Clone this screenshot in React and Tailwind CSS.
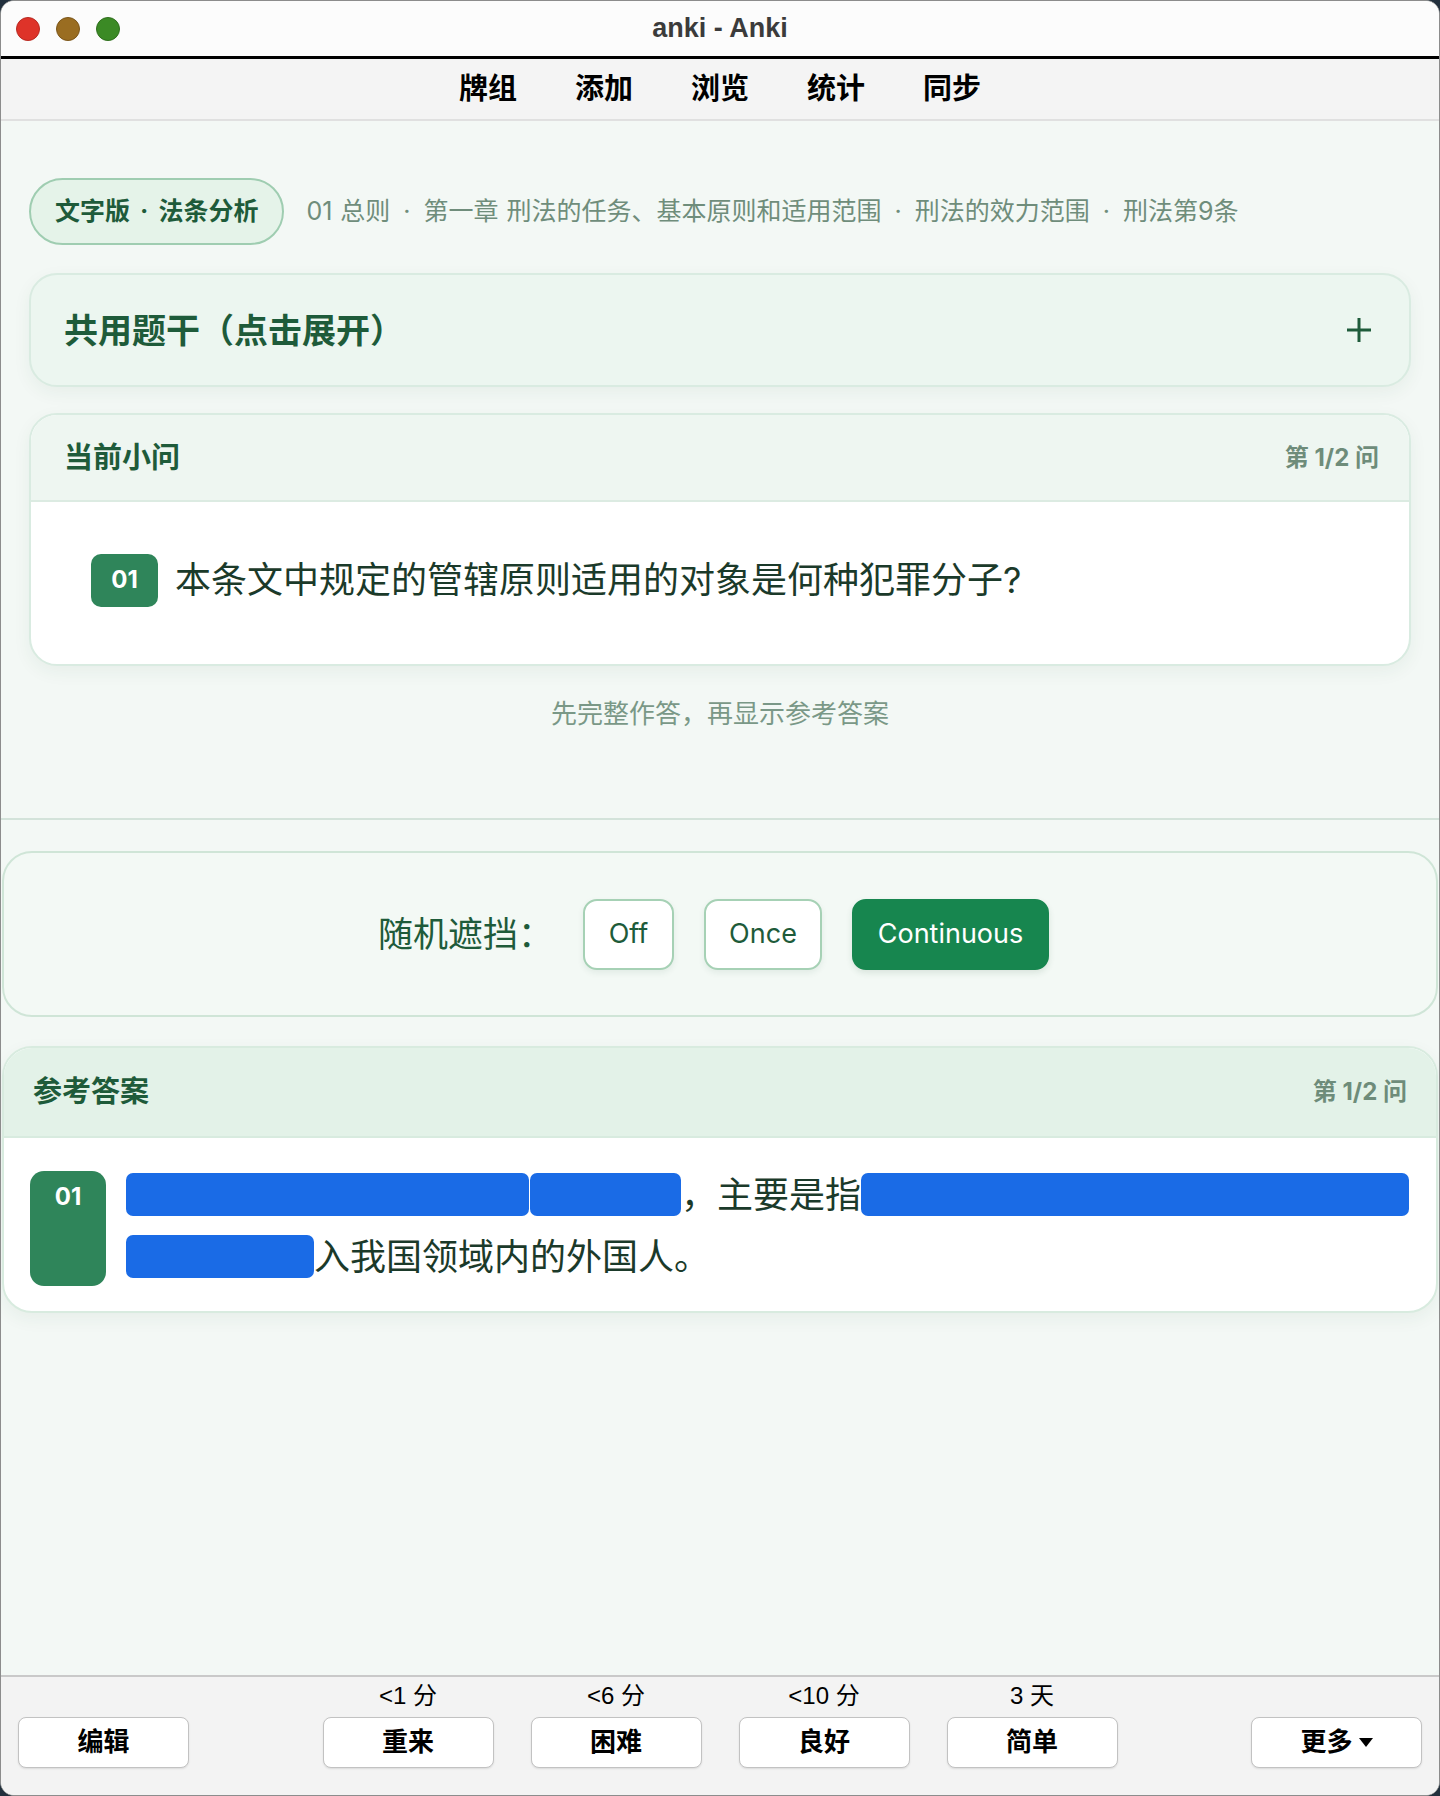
export default function App() {
  const cjk = "font-['Inter','Noto_Sans_CJK_SC',sans-serif]";
  const mask = "inline-block h-[43px] rounded-[7px] bg-[#1a6be6] align-[-8px]";
  return (
    <div className="w-[1440px] h-[1796px] bg-[#22303d]">
      <div className={`w-full h-full rounded-[14px] overflow-hidden flex flex-col bg-[#f3f8f5] border border-[#8c8c8c] ${cjk}`}>
        {/* Title bar */}
        <div className="h-[58px] shrink-0 bg-[#fcfcfc] border-b-[3px] border-black grid grid-cols-[1fr_auto_1fr] items-center">
          <div className="flex items-center gap-[16px] pl-[15px]">
            <span className="w-[24px] h-[24px] rounded-full bg-[#de3329] border border-[#b92a22]" />
            <span className="w-[24px] h-[24px] rounded-full bg-[#9a6d21] border border-[#7c561a]" />
            <span className="w-[24px] h-[24px] rounded-full bg-[#3b8a25] border border-[#2f6f1d]" />
          </div>
          <div className="font-['Liberation_Sans','Noto_Sans_CJK_SC',sans-serif] font-bold text-[27px] text-[#3b3b3b] leading-none">
            anki - Anki
          </div>
          <div />
        </div>

        {/* Nav */}
        <div className="h-[62px] shrink-0 bg-[#f4f4f4] border-b-2 border-[#e0e0e0] flex items-center justify-center gap-[58px] pb-[6px] text-[29px] font-bold text-black leading-none font-['Noto_Sans_CJK_SC',sans-serif]">
          <span>牌组</span>
          <span>添加</span>
          <span>浏览</span>
          <span>统计</span>
          <span>同步</span>
        </div>

        {/* Content */}
        <div className="flex-1 flex flex-col">
          {/* Front */}
          <div className="px-[28px] pt-[57px] pb-[86px] border-b-2 border-[#d3e3da]">
            <div className="flex items-center gap-[22px]">
              <div className="h-[67px] px-[24px] rounded-full border-2 border-[#9fcdb1] bg-[#e5f3e9] flex items-center text-[25px] font-bold text-[#1e5b3a] whitespace-nowrap">
                文字版<span className="mx-[10px]">·</span>法条分析
              </div>
              <div className="text-[25px] text-[#6f8d7b] whitespace-nowrap">
                01<span className="ml-[8px]">总则</span><span className="mx-[13px]">·</span>第一章<span className="ml-[8px]">刑法的任务、基本原则和适用范围</span><span className="mx-[13px]">·</span>刑法的效力范围<span className="mx-[13px]">·</span>刑法第9条
              </div>
            </div>

            <div className="mt-[28px] h-[114px] rounded-[28px] border-2 border-[#d9ebe1] bg-[#ecf6f0] flex items-center justify-between pl-[33px] pr-[37px] shadow-[0_6px_18px_rgba(30,80,50,0.06)]">
              <span className="text-[34px] font-bold text-[#1e5b3a]">共用题干（点击展开）</span>
              <svg width="26" height="26" viewBox="0 0 26 26" fill="none" stroke="#1e5b3a" strokeWidth="3" strokeLinecap="butt">
                <line x1="13" y1="1" x2="13" y2="25" />
                <line x1="1" y1="13" x2="25" y2="13" />
              </svg>
            </div>

            <div className="mt-[26px] rounded-[28px] border-2 border-[#d9ebe1] overflow-hidden bg-white shadow-[0_6px_18px_rgba(30,80,50,0.06)]">
              <div className="h-[87px] bg-[#eef6f1] border-b-2 border-[#dcebe2] flex items-center justify-between pl-[33px] pr-[30px]">
                <span className="text-[29px] font-bold text-[#1e5b3a]">当前小问</span>
                <span className="text-[24px] font-bold text-[#6e8c7a]">第 1/2 问</span>
              </div>
              <div className="h-[162px] flex items-center pl-[60px] gap-[17px] pb-[6px]">
                <div className="w-[67px] h-[53px] rounded-[10px] bg-[#2f855a] flex items-center justify-center text-white font-bold text-[24px]">
                  01
                </div>
                <div className="text-[36px] text-[#1b3a2a]">本条文中规定的管辖原则适用的对象是何种犯罪分子?</div>
              </div>
            </div>

            <div className="mt-[30px] text-center text-[26px] leading-[36px] text-[#7a9887]">
              先完整作答，再显示参考答案
            </div>
          </div>

          {/* Back */}
          <div className="px-[1px]">
            <div className="mt-[31px] h-[166px] rounded-[30px] border-2 border-[#cfe5d7] bg-[#f3f9f5] flex items-center justify-center gap-[30px] pr-[13px]">
              <span className="text-[35px] text-[#1e5b3a]">随机遮挡：</span>
              <button className="w-[91px] h-[71px] rounded-[14px] border-2 border-[#a6d1b5] bg-white text-[27px] text-[#1e5b3a] shadow-[0_3px_6px_rgba(30,80,50,0.08)]">
                Off
              </button>
              <button className="w-[118px] h-[71px] rounded-[14px] border-2 border-[#a6d1b5] bg-white text-[27px] text-[#1e5b3a] shadow-[0_3px_6px_rgba(30,80,50,0.08)]">
                Once
              </button>
              <button className="w-[197px] h-[71px] rounded-[14px] border-2 border-[#17864f] bg-[#17864f] text-[27px] text-white shadow-[0_3px_6px_rgba(30,80,50,0.12)]">
                Continuous
              </button>
            </div>

            <div className="mt-[29px] rounded-[30px] border-2 border-[#d8ebdf] overflow-hidden bg-white shadow-[0_6px_18px_rgba(30,80,50,0.06)]">
              <div className="h-[90px] bg-[#e3f2e8] border-b-2 border-[#d8ebdf] flex items-center justify-between pl-[29px] pr-[29px]">
                <span className="text-[29px] font-bold text-[#1e5b3a]">参考答案</span>
                <span className="text-[24px] font-bold text-[#6e8c7a]">第 1/2 问</span>
              </div>
              <div className="h-[173px] flex items-start pl-[26px] pt-[26px] gap-[20px]">
                <div className="w-[76px] h-[115px] mt-[7px] shrink-0 rounded-[14px] bg-[#2f855a] flex justify-center pt-[12px] text-white font-bold text-[24px] leading-[28px]">
                  01
                </div>
                <div className="flex-1 pr-[10px] text-[36px] leading-[62px] text-[#1b3a2a]">
                  <span className={`${mask} w-[403px]`} />
                  <span className={`${mask} w-[151px] ml-[1px]`} />
                  ，主要是指
                  <span className={`${mask} w-[548px]`} />
                  <span className={`${mask} w-[188px]`} />
                  入我国领域内的外国人。
                </div>
              </div>
            </div>
          </div>

          <div className="flex-1" />
        </div>

        {/* Bottom bar */}
        <div className="h-[120px] shrink-0 border-t-2 border-[#c9c9c9] bg-[#f3f3f3] flex items-end justify-between px-[17px] pb-[27px] font-['Liberation_Sans','Noto_Sans_CJK_SC',sans-serif]">
          <button className="w-[171px] h-[51px] rounded-[8px] border-[1.5px] border-[#c2c2c2] bg-white text-[26px] font-bold text-black shadow-[0_1px_2px_rgba(0,0,0,0.1)]">
            编辑
          </button>
          <div className="flex gap-[37px]">
            {[
              ["<1 分", "重来"],
              ["<6 分", "困难"],
              ["<10 分", "良好"],
              ["3 天", "简单"],
            ].map(([t, l]) => (
              <div key={l} className="flex flex-col items-center">
                <span className="text-[24px] leading-[28px] mb-[7px] text-black">{t}</span>
                <button className="w-[171px] h-[51px] rounded-[8px] border-[1.5px] border-[#c2c2c2] bg-white text-[26px] font-bold text-black shadow-[0_1px_2px_rgba(0,0,0,0.1)]">
                  {l}
                </button>
              </div>
            ))}
          </div>
          <button className="w-[171px] h-[51px] rounded-[8px] border-[1.5px] border-[#c2c2c2] bg-white text-[26px] font-bold text-black shadow-[0_1px_2px_rgba(0,0,0,0.1)] flex items-center justify-center gap-[6px]">
            更多
            <svg width="14" height="9" viewBox="0 0 14 9">
              <polygon points="0,0 14,0 7,9" fill="#000" />
            </svg>
          </button>
        </div>
      </div>
    </div>
  );
}
